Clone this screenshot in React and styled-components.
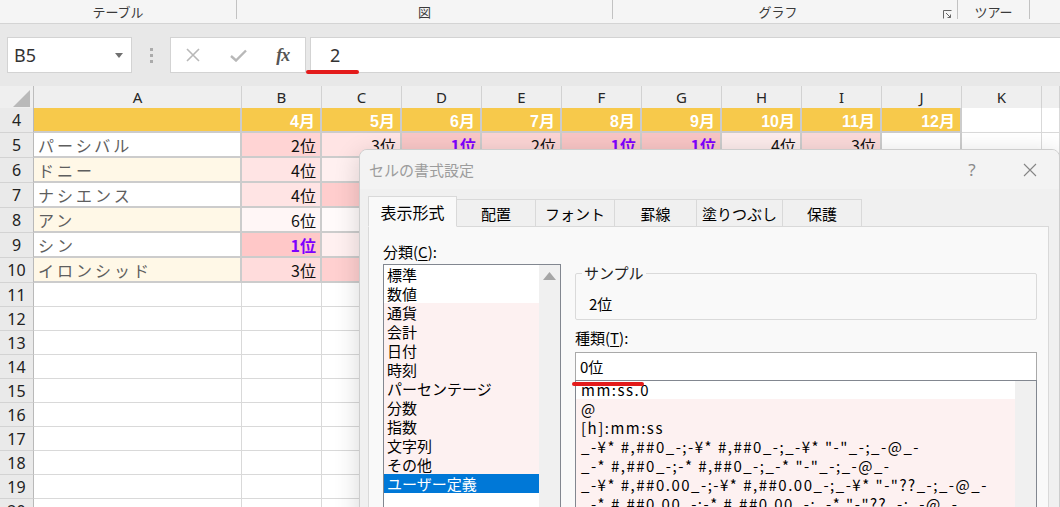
import styled, { createGlobalStyle } from 'styled-components';

const CJK = `"Noto Sans CJK JP", sans-serif`;
const UI = `"Noto Sans", "Noto Sans CJK JP", sans-serif`;
const NUM = `"Liberation Sans", "Noto Sans CJK JP", sans-serif`;

const GlobalStyle = createGlobalStyle`
  html, body {
    margin: 0;
    padding: 0;
    overflow: hidden;
    background: #fff;
  }
  body {
    font-family: ${UI};
  }
`;

const months = ['4月', '5月', '6月', '7月', '8月', '9月', '10月', '11月', '12月'];

// [text, background, isTop] — cells hidden by the dialog keep only their colour
const players = [
  {
    name: 'パーシバル',
    cells: [
      ['2位', '#ffd4d4'], ['3位', '#ffe4e4'], ['1位', '#f9c7c7', true], ['2位', '#fbd4d4'],
      ['1位', '#f8c5c5', true], ['1位', '#f8c5c5', true], ['4位', '#fcebeb'], ['3位', '#fad9d9'], ['', '#ffffff'],
    ],
  },
  {
    name: 'ドニー',
    cells: [
      ['4位', '#ffe4e4'], ['', '#fff0f0'], ['', '#fde0e0'], ['', '#ffe6e6'],
      ['', '#fbd4d4'], ['', '#fde0e0'], ['', '#fbd4d4'], ['', '#ffe6e6'], ['', '#ffffff'],
    ],
  },
  {
    name: 'ナシエンス',
    cells: [
      ['4位', '#ffe4e4'], ['', '#ffcdcd'], ['', '#fbd4d4'], ['', '#fde0e0'],
      ['', '#ffe6e6'], ['', '#fbd4d4'], ['', '#f8c5c5'], ['', '#fbd4d4'], ['', '#ffffff'],
    ],
  },
  {
    name: 'アン',
    cells: [
      ['6位', '#fff6f6'], ['', '#fffafa'], ['', '#fff0f0'], ['', '#fff6f6'],
      ['', '#fff0f0'], ['', '#fff6f6'], ['', '#fff0f0'], ['', '#fff6f6'], ['', '#ffffff'],
    ],
  },
  {
    name: 'シン',
    cells: [
      ['1位', '#ffc8c8', true], ['', '#fff0f0'], ['', '#ffe6e6'], ['', '#fff0f0'],
      ['', '#fde0e0'], ['', '#ffe6e6'], ['', '#fff6f6'], ['', '#f8c5c5'], ['', '#ffffff'],
    ],
  },
  {
    name: 'イロンシッド',
    cells: [
      ['3位', '#ffdcdc'], ['', '#ffd0d0'], ['', '#fff6f6'], ['', '#f8c5c5'],
      ['', '#fff6f6'], ['', '#fff0f0'], ['', '#fde0e0'], ['', '#fff0f0'], ['', '#ffffff'],
    ],
  },
];

const letters = ['A', 'B', 'C', 'D', 'E', 'F', 'G', 'H', 'I', 'J', 'K'];
const emptyRows = [11, 12, 13, 14, 15, 16, 17, 18, 19, 20];

const categories = [
  '標準', '数値', '通貨', '会計', '日付', '時刻', 'パーセンテージ', '分数', '指数', '文字列', 'その他', 'ユーザー定義',
];

const formats = [
  'mm:ss.0',
  '@',
  '[h]:mm:ss',
  '_-¥* #,##0_-;-¥* #,##0_-;_-¥* "-"_-;_-@_-',
  '_-* #,##0_-;-* #,##0_-;_-* "-"_-;_-@_-',
  '_-¥* #,##0.00_-;-¥* #,##0.00_-;_-¥* "-"??_-;_-@_-',
  '_-* #,##0.00_-;-* #,##0.00_-;_-* "-"??_-;_-@_-',
];

const tabs = [
  { label: '表示形式', w: 89, active: true },
  { label: '配置', w: 79 },
  { label: 'フォント', w: 79 },
  { label: '罫線', w: 82 },
  { label: '塗りつぶし', w: 86 },
  { label: '保護', w: 79 },
];

const App = () => (
  <Page>
    <GlobalStyle />
    <Ribbon>
      <Group $w={236}><GroupLabel>テーブル</GroupLabel></Group>
      <Divider />
      <Group $w={375}><GroupLabel>図</GroupLabel></Group>
      <Divider />
      <Group $w={344}>
        <GroupLabel>グラフ</GroupLabel>
        <Launcher width="9" height="9" viewBox="0 0 9 9">
          <path d="M0.5 8.5V0.5H8.5" fill="none" stroke="#666" />
          <path d="M3 3L7.5 7.5M4.5 7.5H7.5V4.5" fill="none" stroke="#666" />
        </Launcher>
      </Group>
      <Divider />
      <Group $w={71}><GroupLabel>ツアー</GroupLabel></Group>
      <Divider />
      <Group />
    </Ribbon>

    <FormulaBar>
      <NameBox>
        B5
        <svg width="8" height="5" viewBox="0 0 8 5">
          <path d="M0 0H8L4 5Z" fill="#707070" />
        </svg>
      </NameBox>
      <Grip>
        <svg width="3" height="16" viewBox="0 0 3 16">
          <rect x="0" y="1" width="3" height="3" fill="#ababab" />
          <rect x="0" y="7" width="3" height="3" fill="#ababab" />
          <rect x="0" y="13" width="3" height="3" fill="#ababab" />
        </svg>
      </Grip>
      <FxBox>
        <FxButton>
          <svg width="14" height="14" viewBox="0 0 14 14">
            <path d="M1 1L13 13M13 1L1 13" stroke="#b8b8b8" strokeWidth="1.6" />
          </svg>
        </FxButton>
        <FxButton>
          <svg width="17" height="13" viewBox="0 0 17 13">
            <path d="M1 7L6 11.5L16 1.5" fill="none" stroke="#b8b8b8" strokeWidth="2.4" />
          </svg>
        </FxButton>
        <FxButton>
          <FxText>fx</FxText>
        </FxButton>
      </FxBox>
      <FormulaInput>2</FormulaInput>
    </FormulaBar>

    <Sheet>
      <Row $h={22}>
        <Corner>
          <svg width="34" height="22" viewBox="0 0 34 22">
            <path d="M13 21H30V4Z" fill="#b9b9b9" />
          </svg>
        </Corner>
        {letters.map((l) => (
          <ColHead key={l}>{l}</ColHead>
        ))}
        <ColHead />
      </Row>

      <Row $h={25}>
        <RowHead>4</RowHead>
        <NameCell $bg="#f7c94b" />
        {months.map((m) => (
          <MonthCell key={m}>{m}</MonthCell>
        ))}
        <GridCell />
        <GridCell />
      </Row>

      {players.map((p, i) => (
        <Row $h={25} key={p.name}>
          <RowHead>{i + 5}</RowHead>
          <NameCell $bg={i % 2 ? '#fff8e7' : '#ffffff'}>{p.name}</NameCell>
          {p.cells.map(([t, bg, top], j) => (
            <RankCell key={j} $bg={bg} $top={top}>{t}</RankCell>
          ))}
          <GridCell />
          <GridCell />
        </Row>
      ))}

      {emptyRows.map((n) => (
        <Row $h={24} key={n}>
          <RowHead>{n}</RowHead>
          {letters.map((l) => (
            <GridCell key={l} />
          ))}
          <GridCell />
        </Row>
      ))}
    </Sheet>

    <Dialog>
      <TitleBar>
        <Title>セルの書式設定</Title>
        <TitleButton>?</TitleButton>
        <TitleButton>
          <svg width="14" height="14" viewBox="0 0 14 14">
            <path d="M1 1L13 13M13 1L1 13" stroke="#858585" strokeWidth="1.1" />
          </svg>
        </TitleButton>
      </TitleBar>
      <DialogBody>
        <TabList>
          {tabs.map((t) => (
            <Tab key={t.label} $w={t.w} $active={t.active}>{t.label}</Tab>
          ))}
        </TabList>
        <Panel>
          <LeftColumn>
            <FieldLabel>分類(<u>C</u>):</FieldLabel>
            <ListBox $w={178}>
              <ListItems>
                {categories.map((c, i) => (
                  <ListItem
                    key={c}
                    $selected={c === 'ユーザー定義'}
                    $tint={i >= 2 && c !== 'ユーザー定義'}
                  >
                    {c}
                  </ListItem>
                ))}
              </ListItems>
              <ScrollTrack>
                <svg width="13" height="8" viewBox="0 0 13 8">
                  <path d="M0 8L6.5 0L13 8Z" fill="#a6a6a6" />
                </svg>
              </ScrollTrack>
            </ListBox>
          </LeftColumn>

          <RightColumn>
            <SampleBox>
              <legend>サンプル</legend>
              <SampleValue>2位</SampleValue>
            </SampleBox>
            <FieldLabel $gap={8}>種類(<u>T</u>):</FieldLabel>
            <TextBox>0位</TextBox>
            <ListBox>
              <FormatItems>
                {formats.map((f, i) => (
                  <FormatItem key={f} $tint={i > 0} $first={i === 0}>{f}</FormatItem>
                ))}
              </FormatItems>
              <ScrollTrack />
            </ListBox>
          </RightColumn>
        </Panel>
      </DialogBody>
    </Dialog>

    <Marker $x={306} $y={70} $w={53} />
    <Marker $x={572} $y={382} $w={72} />
  </Page>
);

const Page = styled.div`
  position: relative;
  width: 1060px;
  height: 507px;
  overflow: hidden;
  background: #fff;
`;

/* ---------- ribbon group captions ---------- */

const Ribbon = styled.div`
  display: flex;
  height: 24px;
  box-sizing: border-box;
  background: #f5f5f5;
  border-bottom: 1px solid #d4d4d4;
  font-family: ${CJK};
  font-size: 13px;
  color: #3a3a3a;
`;

const Group = styled.div`
  display: flex;
  align-items: flex-start;
  width: ${(p) => (p.$w ? `${p.$w}px` : 'auto')};
  flex: ${(p) => (p.$w ? 'none' : 1)};
`;

const GroupLabel = styled.div`
  flex: 1;
  text-align: center;
  padding-top: 4px;
  line-height: 16px;
`;

const Launcher = styled.svg`
  margin: 10px 5px 0 0;
`;

const Divider = styled.div`
  width: 1px;
  height: 19px;
  background: #c2c2c2;
`;

/* ---------- formula bar ---------- */

const FormulaBar = styled.div`
  display: flex;
  align-items: flex-start;
  height: 62px;
  box-sizing: border-box;
  padding: 13px 0 0 7px;
  background: #e8e8e8;
`;

const NameBox = styled.div`
  display: flex;
  align-items: center;
  justify-content: space-between;
  width: 125px;
  height: 36px;
  box-sizing: border-box;
  padding: 0 8px 0 6px;
  background: #fff;
  border: 1px solid #d3d3d3;
  font-family: ${UI};
  font-size: 18px;
  color: #333;
`;

const Grip = styled.div`
  display: flex;
  align-items: center;
  justify-content: center;
  width: 38px;
  height: 36px;
`;

const FxBox = styled.div`
  display: flex;
  width: 136px;
  height: 36px;
  box-sizing: border-box;
  background: #fff;
  border: 1px solid #d3d3d3;
`;

const FxButton = styled.div`
  flex: 1;
  display: flex;
  align-items: center;
  justify-content: center;
`;

const FxText = styled.span`
  font-family: "Liberation Serif", serif;
  font-style: italic;
  font-weight: 700;
  font-size: 18px;
  color: #555;
  letter-spacing: -1px;
`;

const FormulaInput = styled.div`
  flex: 1;
  height: 36px;
  margin-left: 4px;
  box-sizing: border-box;
  padding-left: 19px;
  background: #fff;
  border: 1px solid #d3d3d3;
  border-right: none;
  font-family: ${UI};
  font-size: 18px;
  line-height: 34px;
  color: #333;
`;

/* ---------- spreadsheet ---------- */

const Sheet = styled.div`
  display: flex;
  flex-direction: column;
`;

const Row = styled.div`
  display: grid;
  grid-template-columns: 34px 208px repeat(10, 80px) 1fr;
  height: ${(p) => p.$h}px;
  flex: none;
`;

const Corner = styled.div`
  background: #efefef;
  border-right: 1px solid #bdbdbd;
  border-bottom: 1px solid #bdbdbd;
  box-sizing: border-box;
  svg {
    display: block;
  }
`;

const ColHead = styled.div`
  display: flex;
  align-items: center;
  justify-content: center;
  box-sizing: border-box;
  background: #efefef;
  border-right: 1px solid #d2d2d2;
  border-bottom: 1px solid #bdbdbd;
  font-family: ${UI};
  font-size: 15px;
  color: #262626;
`;

const RowHead = styled.div`
  display: flex;
  align-items: center;
  justify-content: center;
  box-sizing: border-box;
  background: #eaeaea;
  border-right: 1px solid #b9b9b9;
  border-bottom: 1px solid #d3d3d3;
  font-family: ${UI};
  font-size: 16px;
  color: #222;
`;

const TableCell = styled.div`
  display: flex;
  align-items: center;
  box-sizing: border-box;
  overflow: hidden;
  white-space: nowrap;
  background: ${(p) => p.$bg || '#fff'};
  border-right: 2px solid #cccccc;
  border-bottom: 2px solid #cccccc;
`;

const NameCell = styled(TableCell)`
  padding-left: 4px;
  font-family: ${CJK};
  font-size: 16px;
  letter-spacing: 3px;
  color: #5e5e5e;
`;

const MonthCell = styled(TableCell)`
  justify-content: flex-end;
  padding-right: 5px;
  background: #f7c94b;
  font-family: ${NUM};
  font-weight: 700;
  font-size: 16px;
  color: #fff;
`;

const RankCell = styled(TableCell)`
  justify-content: flex-end;
  padding-right: 4px;
  font-family: ${CJK};
  font-size: 16px;
  font-weight: ${(p) => (p.$top ? 700 : 400)};
  color: ${(p) => (p.$top ? '#7d00ff' : '#111')};
`;

const GridCell = styled.div`
  box-sizing: border-box;
  background: #fff;
  border-right: 1px solid #d9d9d9;
  border-bottom: 1px solid #d9d9d9;
`;

/* ---------- dialog ---------- */

const Dialog = styled.div`
  position: absolute;
  left: 359px;
  top: 149px;
  width: 701px;
  height: 380px;
  box-sizing: border-box;
  background: #f0f0f0;
  border: 1px solid #cdcdcd;
  border-radius: 8px 8px 0 0;
  box-shadow: 0 6px 26px rgba(0, 0, 0, 0.16);
  font-family: ${CJK};
  font-size: 15px;
  color: #000;
  overflow: hidden;
`;

const TitleBar = styled.div`
  display: flex;
  align-items: center;
  height: 39px;
  padding-left: 9px;
  background: #f3f3f3;
`;

const Title = styled.div`
  flex: 1;
  color: #9c9c9c;
  font-size: 15px;
`;

const TitleButton = styled.div`
  display: flex;
  align-items: center;
  justify-content: center;
  width: 58px;
  height: 39px;
  font-family: ${UI};
  font-size: 17px;
  color: #8a8a8a;
`;

const DialogBody = styled.div`
  padding: 7px 10px 0 8px;
`;

const TabList = styled.div`
  display: flex;
  align-items: flex-end;
  height: 31px;
  position: relative;
  z-index: 1;
  margin-bottom: -1px;
`;

const Tab = styled.div`
  display: flex;
  align-items: center;
  justify-content: center;
  width: ${(p) => p.$w}px;
  height: ${(p) => (p.$active ? 31 : 28)}px;
  box-sizing: border-box;
  background: ${(p) => (p.$active ? '#f9f9f9' : '#f0f0f0')};
  border: 1px solid #d9d9d9;
  border-left: ${(p) => (p.$active ? '1px solid #d9d9d9' : 'none')};
  border-bottom: ${(p) => (p.$active ? '1px solid #f9f9f9' : '1px solid #d9d9d9')};
  font-size: ${(p) => (p.$active ? 16 : 15)}px;
`;

const Panel = styled.div`
  display: grid;
  grid-template-columns: 178px 462px;
  column-gap: 14px;
  height: 300px;
  box-sizing: border-box;
  padding: 15px 10px 0 14px;
  background: #f9f9f9;
  border: 1px solid #d9d9d9;
`;

const LeftColumn = styled.div`
  display: flex;
  flex-direction: column;
`;

const RightColumn = styled.div`
  display: flex;
  flex-direction: column;
  padding-top: 22px;
`;

const FieldLabel = styled.div`
  height: 22px;
  line-height: 20px;
  margin-top: ${(p) => p.$gap || 0}px;
  u {
    text-underline-offset: 2px;
  }
`;

const ListBox = styled.div`
  display: flex;
  width: ${(p) => (p.$w ? `${p.$w}px` : 'auto')};
  height: 260px;
  box-sizing: border-box;
  background: #fff;
  border: 1px solid #828790;
  overflow: hidden;
`;

const ListItems = styled.div`
  flex: 1;
`;

const ListItem = styled.div`
  height: 19px;
  line-height: 19px;
  padding-left: 3px;
  white-space: nowrap;
  background: ${(p) => (p.$selected ? '#0078d7' : p.$tint ? '#fdf1f1' : '#fff')};
  color: ${(p) => (p.$selected ? '#fff' : '#000')};
`;

const ScrollTrack = styled.div`
  display: flex;
  justify-content: center;
  width: 21px;
  padding-top: 7px;
  box-sizing: border-box;
  background: #f0f0f0;
  align-items: flex-start;
`;

const SampleBox = styled.fieldset`
  margin: 0;
  height: 56px;
  box-sizing: border-box;
  padding: 0 0 0 13px;
  border: 1px solid #dadada;
  border-radius: 2px;
  legend {
    margin-left: -7px;
    padding: 0 2px;
    font-size: 15px;
    line-height: 18px;
    color: #222;
  }
`;

const SampleValue = styled.div`
  margin-top: 12px;
  line-height: 20px;
`;

const TextBox = styled.div`
  height: 28px;
  box-sizing: border-box;
  padding-left: 4px;
  margin-top: 2px;
  background: #fff;
  border: 1px solid #a9a9a9;
  border-bottom: none;
  line-height: 27px;
`;

const FormatItems = styled.div`
  flex: 1;
`;

const FormatItem = styled.div`
  height: ${(p) => (p.$first ? 18 : 19)}px;
  line-height: ${(p) => (p.$first ? 18 : 19)}px;
  padding-left: 5px;
  white-space: nowrap;
  letter-spacing: 1.5px;
  background: ${(p) => (p.$tint ? '#fdf1f1' : '#fff')};
`;

/* ---------- red annotation strokes ---------- */

const Marker = styled.div`
  position: absolute;
  left: ${(p) => p.$x}px;
  top: ${(p) => p.$y}px;
  width: ${(p) => p.$w}px;
  height: 4px;
  border-radius: 2px;
  background: #e31b1b;
  z-index: 2;
`;

export default App;
